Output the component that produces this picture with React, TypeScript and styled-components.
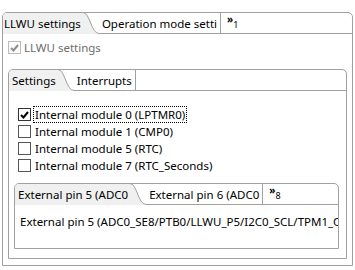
import React from 'react';
import styled, { createGlobalStyle } from 'styled-components';

const GlobalStyle = createGlobalStyle`
	html, body {
		margin: 0;
		padding: 0;
		background: #fff;
	}
	body {
		font-family: 'Noto Sans', 'Liberation Sans', sans-serif;
		font-size: 11.5px;
		color: #000;
	}
`;

const LINE = '#a0a0a0';
const TAB_BG = '#f0f0f0';

const Page = styled.div`
	width: 355px;
	height: 270px;
	box-sizing: border-box;
	padding: 12px 2px 4px 2px;
	display: flex;
`;

const Folder = styled.div`
	flex: 1;
	display: flex;
	flex-direction: column;
	min-width: 0;
	border: 1px solid ${LINE};
	border-radius: 5px 5px 0 0;
	overflow: hidden;
	background: #fff;
`;

const Header = styled.div`
	flex: none;
	display: flex;
	height: 21px;
`;

const SelectedTab = styled.div<{ $pad: number }>`
	flex: none;
	display: flex;
	align-items: center;
	height: 21px;
	padding: 0 2px 1px ${(p) => p.$pad}px;
	box-sizing: border-box;
	background: ${TAB_BG};
	white-space: nowrap;
`;

const TabRest = styled.div`
	flex: 1;
	display: flex;
	min-width: 0;
	height: 20px;
	border-bottom: 1px solid ${LINE};
`;

const Tab = styled.div`
	flex: none;
	display: flex;
	align-items: center;
	padding: 0 3px 0 1px;
	border-right: 1px solid ${LINE};
	white-space: nowrap;
`;

const Chevron = styled.div`
	display: flex;
	align-items: flex-start;
	padding: 1px 0 0 6px;
	line-height: 1;

	b {
		font-size: 10px;
		font-weight: bold;
		letter-spacing: -1px;
	}

	span {
		font-size: 9px;
		margin-top: 6px;
		margin-left: 1px;
	}
`;

const Body = styled.div<{ $pad: string }>`
	flex: 1;
	display: flex;
	flex-direction: column;
	min-height: 0;
	padding: ${(p) => p.$pad};
`;

const CheckRow = styled.label<{ $disabled?: boolean }>`
	display: flex;
	align-items: center;
	height: 17px;
	color: ${(p) => (p.$disabled ? '#6d6d6d' : '#000')};
	white-space: nowrap;
`;

const Box = styled.span<{ $disabled?: boolean; $dark?: boolean }>`
	flex: none;
	width: 13px;
	height: 13px;
	box-sizing: border-box;
	display: flex;
	align-items: center;
	justify-content: center;
	border: 1px solid ${(p) => (p.$disabled ? '#bcbcbc' : p.$dark ? '#333' : '#555')};
	background: ${(p) => (p.$disabled ? '#fcfcfc' : '#fff')};
	margin-right: 3px;
`;

const Label = styled.span<{ $focus?: boolean }>`
	padding: 0 1px;
	line-height: 15px;
	outline: ${(p) => (p.$focus ? '1px dotted #000' : 'none')};
`;

const CheckList = styled.div`
	display: flex;
	flex-direction: column;
	padding-left: 4px;
	margin-bottom: 9px;
`;

const PinText = styled.div`
	padding: 9px 0 0 5px;
	white-space: nowrap;
	overflow: hidden;
`;

const Curve: React.FC<{ w?: number }> = ({ w = 18 }) => (
	<svg width={w} height={21} viewBox={`0 0 ${w} 21`} style={{ flex: 'none', overflow: 'visible' }}>
		<path d={`M0 -1 C7 -1 8 20.5 ${w - 2} 20.5 H${w} V21 H0 Z`} fill={TAB_BG} />
		<path d={`M0 -0.5 C7 -0.5 8 20.5 ${w - 2} 20.5 H${w}`} fill="none" stroke={LINE} />
	</svg>
);

const Check: React.FC<{ color: string }> = ({ color }) => (
	<svg width={9} height={8} viewBox="0 0 9 8">
		<path d="M1 4 L3.5 6.5 L8 1" fill="none" stroke={color} strokeWidth={2} />
	</svg>
);

interface CheckProps {
	label: string;
	checked?: boolean;
	disabled?: boolean;
	focus?: boolean;
}

const CheckItem: React.FC<CheckProps> = ({ label, checked, disabled, focus }) => (
	<CheckRow $disabled={disabled}>
		<Box $disabled={disabled} $dark={focus}>
			{checked && <Check color={disabled ? '#8c8c8c' : '#000'} />}
		</Box>
		<Label $focus={focus}>{label}</Label>
	</CheckRow>
);

interface TabBarProps {
	selected: string;
	other: string;
	more: number;
	pad: number;
}

const TabBar: React.FC<TabBarProps> = ({ selected, other, more, pad }) => (
	<Header>
		<SelectedTab $pad={pad}>{selected}</SelectedTab>
		<Curve />
		<TabRest>
			<Tab>{other}</Tab>
			{more > 0 && (
				<Chevron>
					<b>»</b>
					<span>{more}</span>
				</Chevron>
			)}
		</TabRest>
	</Header>
);

const modules = [
	{ label: 'Internal module 0 (LPTMR0)', checked: true },
	{ label: 'Internal module 1 (CMP0)', checked: false },
	{ label: 'Internal module 5 (RTC)', checked: false },
	{ label: 'Internal module 7 (RTC_Seconds)', checked: false },
];

const App: React.FC = () => (
	<>
		<GlobalStyle />
		<Page>
			<Folder>
				<TabBar selected="LLWU settings" other="Operation mode setti" more={1} pad={1} />
				<Body $pad="7px 5px 6px 5px">
					<CheckRow $disabled style={{ height: 13, marginBottom: 15 }}>
						<Box $disabled>
							<Check color="#8c8c8c" />
						</Box>
						<span>LLWU settings</span>
					</CheckRow>
					<Folder>
						<TabBar selected="Settings" other="Interrupts" more={0} pad={3} />
						<Body $pad="15px 7px 9px 5px">
							<CheckList>
								{modules.map((m, i) => (
									<CheckItem key={m.label} label={m.label} checked={m.checked} focus={i === 0} />
								))}
							</CheckList>
							<Folder>
								<TabBar selected="External pin 5 (ADC0" other="External pin 6 (ADC0" more={8} pad={3} />
								<Body $pad="0">
									<PinText>External pin 5 (ADC0_SE8/PTB0/LLWU_P5/I2C0_SCL/TPM1_CH0)</PinText>
								</Body>
							</Folder>
						</Body>
					</Folder>
				</Body>
			</Folder>
		</Page>
	</>
);

export default App;
